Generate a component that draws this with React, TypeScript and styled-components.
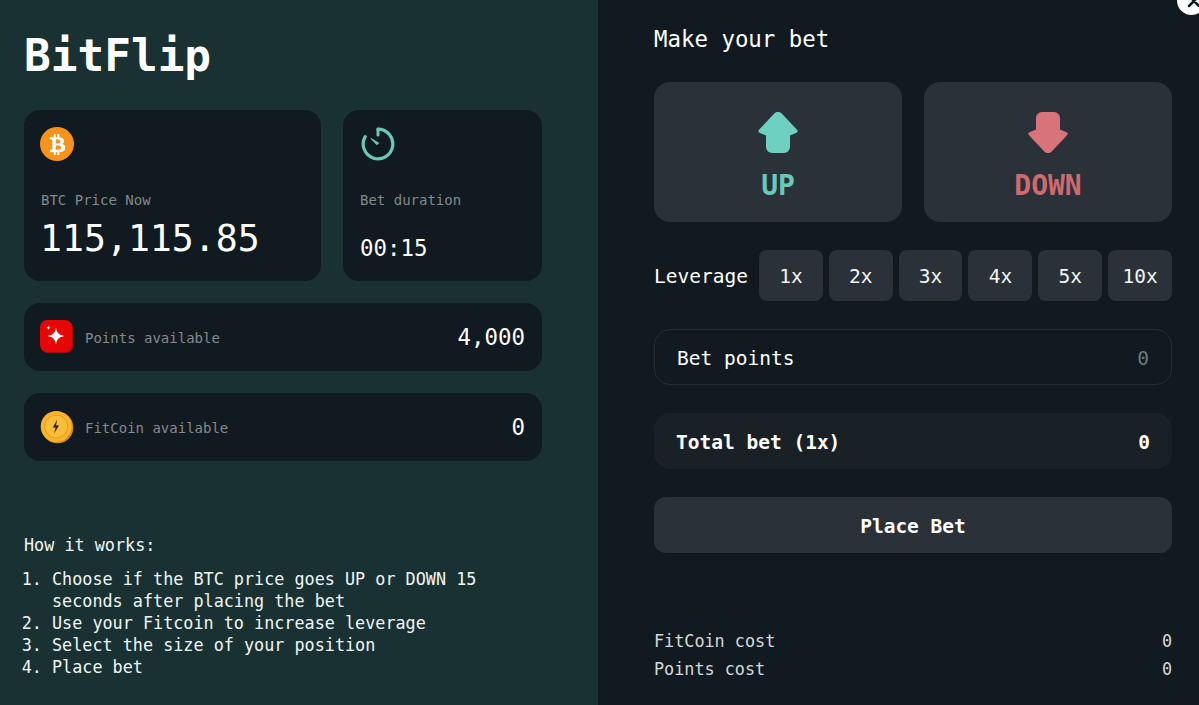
import React from "react";
import styled, { createGlobalStyle } from "styled-components";
import { FaBtc } from "react-icons/fa";

const Global = createGlobalStyle`
  html, body { margin: 0; padding: 0; background: #111a20; }
  body { font-family: "DejaVu Sans Mono", "Liberation Mono", monospace; color: #fff; overflow: hidden; }
  * { box-sizing: border-box; }
`;

const Page = styled.div`
  position: relative;
  display: flex;
  width: 1199px;
  height: 705px;
  overflow: hidden;
`;
const LeftPanel = styled.section`
  width: 598px;
  height: 705px;
  flex: none;
  background: #193133;
  padding: 0 56px 0 24px;
  display: flex;
  flex-direction: column;
`;
const Title = styled.h1`
  margin: 0;
  height: 110px;
  padding-top: 30px;
  font-size: 44.4px;
  line-height: 52px;
  font-weight: 700;
  letter-spacing: 0;
`;
const TopCards = styled.div`
  display: flex;
  gap: 22px;
  height: 171px;
`;
const StatCard = styled.div<{ $w: number }>`
  width: ${(p) => p.$w}px;
  background: #111a20;
  border-radius: 16px;
  padding: 17px;
  display: flex;
  flex-direction: column;
`;
const IconSlot = styled.div<{ $shift?: number }>`
  height: 34px;
  margin-left: ${(p) => p.$shift ?? 0}px;
  display: flex;
  align-items: center;
`;
const StatLabel = styled.div`
  margin-top: 30px;
  font-size: 14px;
  line-height: 18px;
  color: #83898c;
`;
const BigValue = styled.div`
  margin-top: 9px;
  margin-left: -1px;
  font-size: 36.5px;
  line-height: 42px;
`;
const SmallValue = styled.div`
  margin-top: 24px;
  font-size: 22.4px;
  line-height: 30px;
`;
const BalanceRow = styled.div`
  height: 68px;
  margin-top: 22px;
  background: #111a20;
  border-radius: 16px;
  padding: 0 17px 0 16px;
  display: flex;
  align-items: center;
`;
const BalanceLabel = styled.span`
  margin-left: 11px;
  padding-top: 1px;
  font-size: 14px;
  color: #83898c;
`;
const BalanceValue = styled.span`
  margin-left: auto;
  font-size: 22.4px;
`;
const Help = styled.div`
  margin-top: 73px;
  font-size: 16.8px;
  line-height: 22px;
  color: #f2f5f5;
`;
const HelpTitle = styled.div`
  margin-bottom: 12px;
`;
const HelpList = styled.ol`
  margin: 0;
  padding: 0 0 0 28px;
  list-style-position: outside;
  li { padding: 0; }
`;

const RightPanel = styled.section`
  flex: 1;
  height: 705px;
  background: #111a20;
  padding: 0 27px 0 56px;
  display: flex;
  flex-direction: column;
`;
const Heading = styled.h2`
  margin: 0;
  height: 82px;
  padding-top: 26px;
  font-size: 22.4px;
  line-height: 27px;
  font-weight: 400;
`;
const Directions = styled.div`
  display: flex;
  gap: 22px;
  height: 140px;
`;
const DirectionButton = styled.button<{ $color: string }>`
  flex: 1;
  border: 0;
  border-radius: 16px;
  background: #2a3138;
  color: ${(p) => p.$color};
  font-family: inherit;
  font-size: 28px;
  font-weight: 700;
  line-height: 34px;
  display: flex;
  flex-direction: column;
  align-items: center;
  padding: 30px 0 0;
  gap: 16px;
`;
const LeverageRow = styled.div`
  margin-top: 28px;
  height: 51px;
  display: flex;
  align-items: center;
`;
const LeverageLabel = styled.span`
  font-size: 19.5px;
  width: 105px;
  padding-top: 2px;
  flex: none;
`;
const LeverageOptions = styled.div`
  flex: 1;
  display: flex;
  gap: 6px;
`;
const LeverageButton = styled.button`
  flex: 1;
  height: 51px;
  border: 0;
  border-radius: 8px;
  background: #2a3138;
  color: #f4f6f6;
  font-family: inherit;
  font-size: 19.5px;
  padding: 1px 0 0;
`;
const BetInput = styled.div`
  margin-top: 28px;
  height: 56px;
  border: 1px solid #262e35;
  border-radius: 16px;
  padding: 2px 22px 0 22px;
  display: flex;
  align-items: center;
  justify-content: space-between;
  font-size: 19.5px;
`;
const Placeholder = styled.span`
  color: #6f777c;
`;
const TotalRow = styled.div`
  margin-top: 28px;
  height: 56px;
  border-radius: 16px;
  background: #192127;
  padding: 2px 22px 0;
  display: flex;
  align-items: center;
  justify-content: space-between;
  font-size: 19.5px;
  font-weight: 700;
`;
const PlaceBet = styled.button`
  margin-top: 28px;
  height: 56px;
  border: 0;
  border-radius: 12px;
  background: #2a3138;
  color: #fff;
  font-family: inherit;
  font-size: 19.5px;
  font-weight: 700;
  padding: 2px 0 0;
`;
const Costs = styled.div`
  margin-top: 77px;
  display: flex;
  flex-direction: column;
  gap: 6px;
`;
const CostRow = styled.div`
  display: flex;
  justify-content: space-between;
  font-size: 16.8px;
  line-height: 22px;
  color: #d5d9da;
`;
const CloseBadge = styled.div`
  position: absolute;
  top: -14px;
  right: -7px;
  width: 29px;
  height: 29px;
  border-radius: 50%;
  background: #fff;
  display: flex;
  align-items: center;
  justify-content: center;
`;
const CloseMark = styled.svg`
  margin-top: 1px;
  margin-left: 5px;
`;
const BtcBadge = styled.div`
  width: 34px;
  height: 34px;
  border-radius: 50%;
  background: #f7931a;
  color: #fff;
  display: flex;
  align-items: center;
  justify-content: center;
  font-size: 21px;
`;
const FlippedSvg = styled.svg<{ $flip?: boolean }>`
  transform: ${(p) => (p.$flip ? "scaleY(-1)" : "none")};
  color: ${(p) => (p.$flip ? "#d6737b" : "#6dd0c1")};
`;

const TimerIcon = () => (
  <svg width="36" height="36" viewBox="0 0 36 36" fill="none">
    <path d="M18 3.2A14.8 14.8 0 1 1 5.2 10.6" stroke="#68c9b9" strokeWidth="3.2" strokeLinecap="round" />
    <path d="M18 3v6" stroke="#68c9b9" strokeWidth="3" strokeLinecap="round" />
    <path d="M11 12.5l7.6 4.6-1.8 1.6z" fill="#68c9b9" stroke="#68c9b9" strokeLinejoin="round" />
  </svg>
);
const PointsIcon = () => (
  <svg width="34" height="34" viewBox="0 0 34 34">
    <rect x="1" y="1" width="32" height="32" rx="7" fill="#a90d12" />
    <rect x="0" y="0" width="32" height="32" rx="7" fill="#e60606" />
    <path d="M16 7.5C17 13 18.8 15 24.5 16 18.8 17 17 19 16 24.5 15 19 13.2 17 7.5 16 13.2 15 15 13 16 7.5Z" fill="#fff" />
    <path d="M8.5 5.5C8.8 7 9.2 7.4 10.8 7.7 9.2 8 8.8 8.4 8.5 10 8.2 8.4 7.8 8 6.2 7.7 7.8 7.4 8.2 7 8.5 5.5Z" fill="#fff" />
  </svg>
);
const CoinIcon = () => (
  <svg width="34" height="34" viewBox="0 0 34 34">
    <circle cx="17.5" cy="17.5" r="15.8" fill="#d98a10" />
    <circle cx="16.2" cy="16.5" r="15.5" fill="#f9b42a" />
    <circle cx="16.2" cy="16.5" r="11.5" fill="#fcbe38" stroke="#e69c1c" strokeWidth="1" />
    <path d="M17.2 9.5l-4.4 8h2.8L14 23.5l5-8h-3z" fill="#2a2312" />
  </svg>
);
const UpArrow = ({ flip }: { flip?: boolean }) => (
  <FlippedSvg $flip={flip} width="40" height="41" viewBox="0 0 40 41">
    <path
      d="M16.5 1.3a5 5 0 0 1 7 0L39 17.8q1.5 2-.5 2.900L32 23.500V35a6 6 0 0 1-6 6H14a6 6 0 0 1-6-6V23.500L1.500 20.700q-2-.9-.5-2.900z"
      fill="currentColor"
    />
  </FlippedSvg>
);

const steps = [
  "Choose if the BTC price goes UP or DOWN 15 seconds after placing the bet",
  "Use your Fitcoin to increase leverage",
  "Select the size of your position",
  "Place bet",
];

export default function App() {
  return (
    <Page>
      <Global />
      <LeftPanel>
        <Title>BitFlip</Title>
        <TopCards>
          <StatCard $w={297}>
            <IconSlot $shift={-1}>
              <BtcBadge><FaBtc /></BtcBadge>
            </IconSlot>
            <StatLabel>BTC Price Now</StatLabel>
            <BigValue>115,115.85</BigValue>
          </StatCard>
          <StatCard $w={199}>
            <IconSlot><TimerIcon /></IconSlot>
            <StatLabel>Bet duration</StatLabel>
            <SmallValue>00:15</SmallValue>
          </StatCard>
        </TopCards>
        <BalanceRow>
          <PointsIcon />
          <BalanceLabel>Points available</BalanceLabel>
          <BalanceValue>4,000</BalanceValue>
        </BalanceRow>
        <BalanceRow>
          <CoinIcon />
          <BalanceLabel>FitCoin available</BalanceLabel>
          <BalanceValue>0</BalanceValue>
        </BalanceRow>
        <Help>
          <HelpTitle>How it works:</HelpTitle>
          <HelpList>
            {steps.map((s) => <li key={s}>{s}</li>)}
          </HelpList>
        </Help>
      </LeftPanel>
      <RightPanel>
        <Heading>Make your bet</Heading>
        <Directions>
          <DirectionButton $color="#68c9b9"><UpArrow />UP</DirectionButton>
          <DirectionButton $color="#cf6a70"><UpArrow flip />DOWN</DirectionButton>
        </Directions>
        <LeverageRow>
          <LeverageLabel>Leverage</LeverageLabel>
          <LeverageOptions>
            {["1x", "2x", "3x", "4x", "5x", "10x"].map((l) => <LeverageButton key={l}>{l}</LeverageButton>)}
          </LeverageOptions>
        </LeverageRow>
        <BetInput>
          <span>Bet points</span>
          <Placeholder>0</Placeholder>
        </BetInput>
        <TotalRow>
          <span>Total bet (1x)</span>
          <span>0</span>
        </TotalRow>
        <PlaceBet>Place Bet</PlaceBet>
        <Costs>
          <CostRow><span>FitCoin cost</span><span>0</span></CostRow>
          <CostRow><span>Points cost</span><span>0</span></CostRow>
        </Costs>
      </RightPanel>
      <CloseBadge>
        <CloseMark width="14" height="14" viewBox="0 0 14 14">
          <path d="M2 2l10 10M12 2L2 12" stroke="#111a20" strokeWidth="2.5" strokeLinecap="round" />
        </CloseMark>
      </CloseBadge>
    </Page>
  );
}
